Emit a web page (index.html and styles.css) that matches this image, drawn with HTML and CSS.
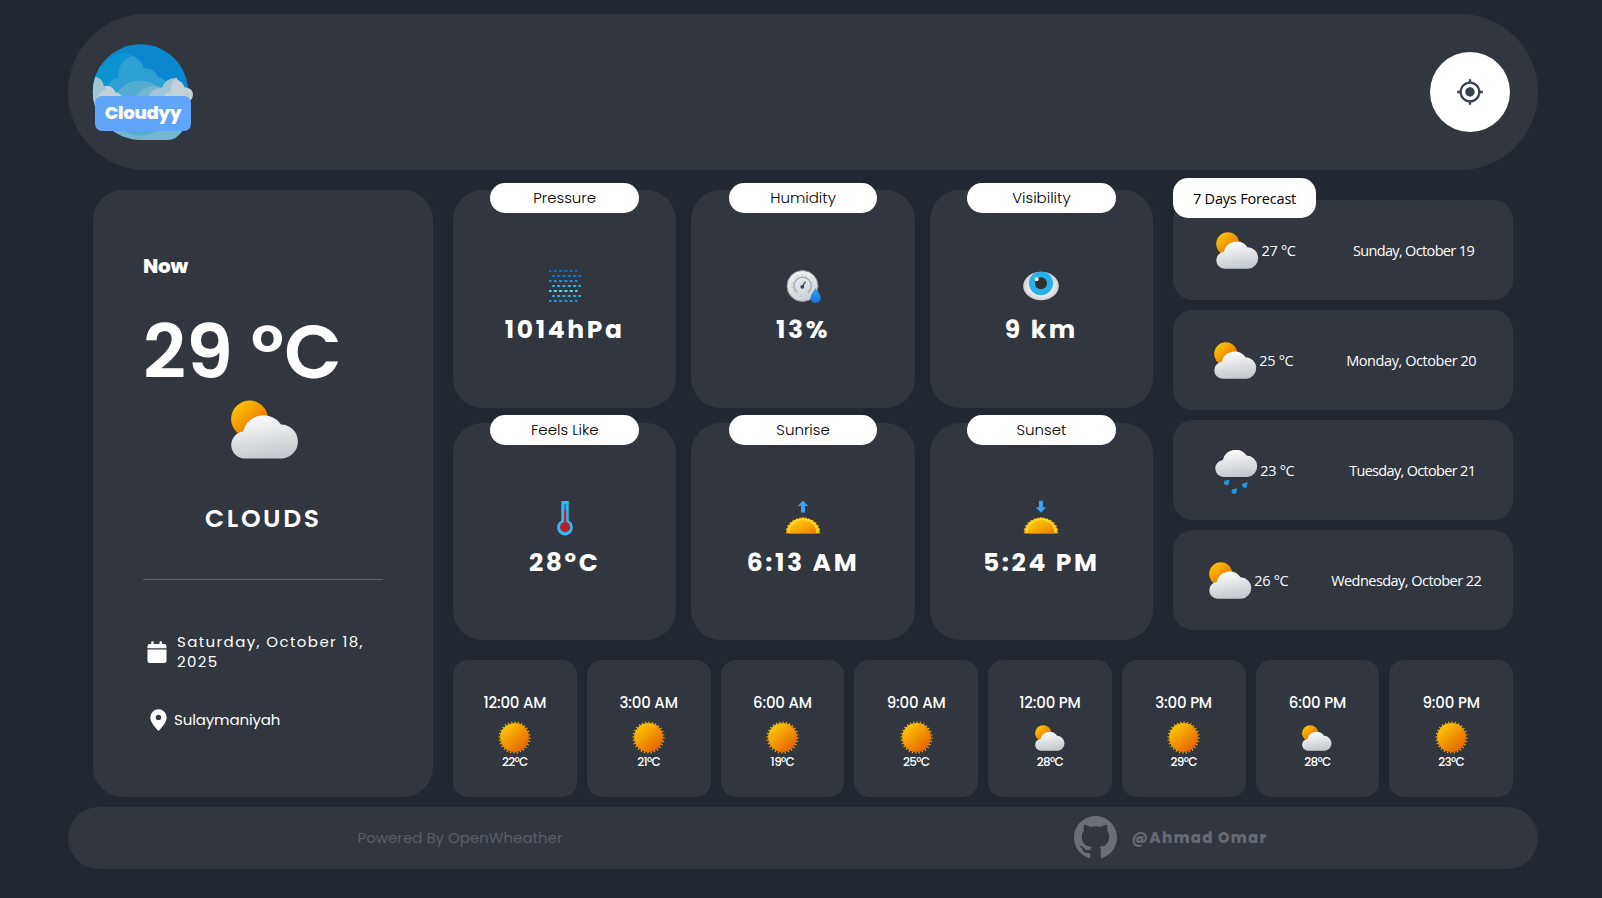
FILE: index.html
```
<!DOCTYPE html>
<html lang="en">
<head>
<meta charset="utf-8">
<title>Cloudyy</title>
<link rel="stylesheet" href="styles.css">
</head>
<body>
<svg class="defs" aria-hidden="true">
  <defs>
    <linearGradient id="g-sun" x1="0.15" y1="0.1" x2="0.85" y2="0.9"><stop offset="0" stop-color="#fcc602"/><stop offset="1" stop-color="#e66200"/></linearGradient>
    <linearGradient id="g-half" x1="0" y1="0" x2="1" y2="1"><stop offset="0.1" stop-color="#fed000"/><stop offset="1" stop-color="#ea7a00"/></linearGradient>
    <linearGradient id="g-cloud" x1="0.35" y1="0" x2="0.6" y2="1"><stop offset="0" stop-color="#fdfdfd"/><stop offset="1" stop-color="#c2c8cc"/></linearGradient>
    <linearGradient id="g-drop" x1="0" y1="0" x2="0" y2="1"><stop offset="0" stop-color="#3aa0f5"/><stop offset="1" stop-color="#0c74e0"/></linearGradient>
    <linearGradient id="g-gauge" x1="0" y1="0" x2="0.4" y2="1"><stop offset="0" stop-color="#f4f5f6"/><stop offset="1" stop-color="#cfd3d6"/></linearGradient>
    <radialGradient id="g-eye"><stop offset="0.6" stop-color="#f2f2f2"/><stop offset="1" stop-color="#cfd0d2"/></radialGradient>
    <clipPath id="disc"><circle cx="47.5" cy="48" r="47.7"/></clipPath>
    <clipPath id="eyeball"><ellipse cx="18" cy="18" rx="17.8" ry="14.3"/></clipPath>
  </defs>
  <symbol id="partly" viewBox="0 0 67 58">
    <circle cx="18.3" cy="18.6" r="18.2" fill="url(#g-sun)"/>
    <path d="M13 57.500A13.300 13.300 0 0 1 12 31A20.700 20.700 0 0 1 49.300 24.100A16.750 16.750 0 0 1 51 57.500Z" fill="url(#g-cloud)"/>
  </symbol>
  <symbol id="rain" viewBox="0 0 67 69">
    <path d="M13 42.200A13.300 13.300 0 0 1 12 15.700A20.700 20.700 0 0 1 49.300 8.800A16.750 16.750 0 0 1 51 42.200Z" fill="url(#g-cloud)"/>
    <g fill="#1b97e4">
      <path id="drop" d="M22.5 46.5L21.4 53.5A4.1 4.1 0 1 1 15.4 48Z"/>
      <use href="#drop" x="12" y="13.5"/>
      <use href="#drop" x="28.500" y="4"/>
    </g>
  </symbol>
  <symbol id="sun" viewBox="0 0 33 33">
    <circle cx="16.500" cy="16.500" r="15.200" fill="none" stroke="#efa90a" stroke-width="1.800" pathLength="84" stroke-dasharray="1.100 1.900"/>
    <circle cx="16.500" cy="16.500" r="14.400" fill="url(#g-sun)"/>
  </symbol>
  <symbol id="half" viewBox="0 0 36 18">
    <path d="M0.200 18L1.800 16L0.700 13.500L2.700 12.200L2.300 9.700L4.500 9.200L4.800 6.700L7 6.600L7.900 4.300L10 4.800L11.400 2.700L13.300 3.600L15.200 1.700L16.700 3L18 1L19.300 3L20.800 1.700L22.700 3.600L24.600 2.700L26 4.800L28.100 4.300L29 6.600L31.200 6.700L31.500 9.200L33.700 9.700L33.300 12.200L35.300 13.500L34.200 16L35.800 18Z" fill="#fcb910"/>
    <path d="M2.700 18A15.300 15.300 0 0 1 33.300 18Z" fill="#ffd633"/>
    <path d="M4.500 18A13.500 13.500 0 0 1 31.500 18Z" fill="url(#g-half)"/>
  </symbol>
</svg>

<div class="app">
  <header class="topbar">
    <div class="logo">
      <svg class="logo-art" viewBox="0 0 96 96">
        <path d="M47.500 96A48 48 0 0 1 0 48L60 50H93Q95 78 90 86Q84 96 74 96Z" fill="#74b6d0"/>
        <g clip-path="url(#disc)">
          <rect width="96" height="60" fill="#0a87cf"/>
          <circle cx="31" cy="32" r="22.500" fill="#0b96d1"/>
          <circle cx="8" cy="36" r="14" fill="#0b96d1"/>
          <path d="M15 60V44Q17 34 26 33.700Q25 25 28.500 20Q33 13.500 39.500 12Q49 17 50.500 24.500Q59 22.500 65.500 33Q72 34 76 42V60Z" fill="#2fa0d3"/>
          <circle cx="47" cy="64" r="27.500" fill="#54acd2"/>
          <circle cx="61" cy="62" r="20" fill="#74b6d0"/>
          <circle cx="-1" cy="44" r="12" fill="#a1c6d6"/>
          <rect x="0" y="42" width="5" height="40" fill="#a1c6d6"/>
        </g>
        <path d="M8 44Q13 40 18 43L20 52H4Z" fill="#a1c6d6"/>
        <path d="M55 53Q59 43 69 44Q73 33 84 34L90 56H55Z" fill="#a1c6d6"/>
        <path d="M70 56Q71 49 78 47Q77 41 82 35.600Q89.500 36.500 91.700 43.600C101 43.600 102 53 97 57H70Z" fill="#c4d1d8"/>
        <path d="M4 54Q6 47 13 46.500Q13 44 11.500 42.300Q19 41 22.500 48.500Q26 48 30 54Z" fill="#c4d1d8"/>
      </svg>
      <span class="logo-name">Cloudyy</span>
    </div>
    <button class="locate" aria-label="Use my location">
      <svg viewBox="0 0 24 24"><path d="M12 8c-2.210 0-4 1.790-4 4s1.790 4 4 4 4-1.790 4-4-1.790-4-4-4zm8.940 3A8.994 8.994 0 0 0 13 3.060V1h-2v2.060A8.994 8.994 0 0 0 3.060 11H1v2h2.060A8.994 8.994 0 0 0 11 20.940V23h2v-2.060A8.994 8.994 0 0 0 20.940 13H23v-2h-2.060zM12 19c-3.870 0-7-3.130-7-7s3.130-7 7-7 7 3.130 7 7-3.130 7-7 7z"/></svg>
    </button>
  </header>

  <main class="board">
    <section class="now card">
      <h2 class="now-title">Now</h2>
      <p class="now-temp">29 °C</p>
      <svg class="now-icon"><use href="#partly"/></svg>
      <p class="now-sky">CLOUDS</p>
      <hr class="rule">
      <div class="meta meta-date">
        <svg class="cal" viewBox="0 0 20 22"><path d="M0.500 7.200V5.200Q0.500 2.900 2.800 2.900H4.300V1Q4.300 0.300 5 0.300H6Q6.700 0.300 6.700 1V2.900H12.500V1Q12.500 0.300 13.200 0.300H14.200Q14.900 0.300 14.900 1V2.900H17.200Q19.500 2.900 19.500 5.200V7.200ZM0.500 8.500H19.500V19.700Q19.500 22 17.200 22H2.800Q0.500 22 0.500 19.700Z"/></svg>
        <span class="date">Saturday, October 18, 2025</span>
      </div>
      <div class="meta meta-place">
        <svg class="pin" viewBox="0 0 17 22"><path fill-rule="evenodd" d="M8.500 0.300A8.200 8.200 0 0 1 16.700 8.500C16.700 13 12 18.200 9.300 21.300Q8.500 22 7.700 21.300C5 18.200 0.300 13 0.300 8.500A8.200 8.200 0 0 1 8.500 0.300ZM8.500 5.700A2.700 2.700 0 1 0 8.500 11.100A2.700 2.700 0 0 0 8.500 5.700Z"/></svg>
        <span>Sulaymaniyah</span>
      </div>
    </section>

    <section class="stats">
      <article class="stat card"><h3 class="pill">Pressure</h3>
        <svg class="stat-icon" viewBox="0 0 36 36"><g fill="none" stroke-width="2" stroke-dasharray="3.200 2.130">
          <g stroke-dashoffset="0.700"><path d="M2 3H30.500" stroke="#1566ac"/><path d="M2 13H30.500" stroke="#1e8fd2"/><path d="M2 23H30.500" stroke="#55d3e8"/><path d="M2 33H30.500" stroke="#1e8fd2"/></g>
          <g stroke-dashoffset="0.500"><path d="M5.200 8H34" stroke="#1074c2"/><path d="M5.200 18H34" stroke="#2eacd9"/><path d="M5.200 28H34" stroke="#2eacd9"/></g></g></svg>
        <p class="value">1014hPa</p></article>
      <article class="stat card"><h3 class="pill">Humidity</h3>
        <svg class="stat-icon" viewBox="0 0 36 36">
          <circle cx="17.500" cy="18" r="15.500" fill="url(#g-gauge)" stroke="#8d959c" stroke-width="1"/>
          <circle cx="17.500" cy="17.500" r="10.500" fill="none" stroke="#a8b0b8" stroke-width="1" stroke-dasharray="1 3.400"/>
          <path d="M12.300 24.500A8.600 8.600 0 1 1 22.800 24.500" fill="none" stroke="#9ba5af" stroke-width="1.200"/>
          <circle cx="17.300" cy="18.500" r="4.500" fill="#d5e2ee"/>
          <circle cx="17.300" cy="18.800" r="1.900" fill="#3a424a"/><path d="M17.300 18.500L20.500 13.500" stroke="#3a424a" stroke-width="1.300"/>
          <path d="M30.700 20C32.700 23.500 35.700 26.500 35.700 30A5.100 5.100 0 0 1 25.500 30C25.500 26.500 28.700 23.500 30.700 20Z" fill="url(#g-drop)"/></svg>
        <p class="value">13%</p></article>
      <article class="stat card"><h3 class="pill">Visibility</h3>
        <svg class="stat-icon" viewBox="0 0 36 36">
          <ellipse cx="18" cy="18" rx="17.800" ry="14.300" fill="url(#g-eye)"/>
          <circle cx="18" cy="15.300" r="12" fill="#29b0e8" clip-path="url(#eyeball)"/>
          <circle cx="18" cy="15.300" r="6" fill="#303030"/><circle cx="13.700" cy="11.200" r="1.900" fill="#fff"/></svg>
        <p class="value">9 km</p></article>
      <article class="stat stat-low card"><h3 class="pill">Feels Like</h3>
        <svg class="stat-icon" viewBox="0 0 36 36">
          <path d="M14.300 1H21.700V20.500A7.900 7.900 0 1 1 14.300 20.500Z" fill="#35b8ee"/>
          <path d="M22 2.500V20" stroke="#2a93c4" stroke-width="1" stroke-dasharray="1 1.600"/>
          <rect x="17" y="4" width="2.200" height="8" fill="#1d7fc0"/>
          <rect x="17" y="10.500" width="2.200" height="15" fill="#c32232"/><circle cx="18.100" cy="27.200" r="5.100" fill="#b3202e"/></svg>
        <p class="value">28°C</p></article>
      <article class="stat stat-low card"><h3 class="pill">Sunrise</h3>
        <svg class="stat-icon" viewBox="0 0 36 36"><path d="M18 0.500L23.200 6.100H20V12.500H16V6.100H12.800Z" fill="#409fee"/><use href="#half" y="15.500" width="36" height="18"/></svg>
        <p class="value">6:13 AM</p></article>
      <article class="stat stat-low card"><h3 class="pill">Sunset</h3>
        <svg class="stat-icon" viewBox="0 0 36 36"><path d="M18 12.800L23.200 7.200H20V0.800H16V7.200H12.800Z" fill="#409fee"/><use href="#half" y="15.500" width="36" height="18"/></svg>
        <p class="value">5:24 PM</p></article>
    </section>

    <section class="forecast">
      <h3 class="forecast-title">7 Days Forecast</h3>
      <div class="day card"><div class="day-temp"><svg class="day-icon"><use href="#partly"/></svg><span>27 °C</span></div><span class="day-date d-sun">Sunday, October 19</span></div>
      <div class="day card"><div class="day-temp"><svg class="day-icon"><use href="#partly"/></svg><span>25 °C</span></div><span class="day-date d-mon">Monday, October 20</span></div>
      <div class="day card"><div class="day-temp"><svg class="day-icon day-rain"><use href="#rain"/></svg><span>23 °C</span></div><span class="day-date d-tue">Tuesday, October 21</span></div>
      <div class="day card"><div class="day-temp"><svg class="day-icon"><use href="#partly"/></svg><span>26 °C</span></div><span class="day-date d-wed">Wednesday, October 22</span></div>
    </section>

    <section class="hours">
      <div class="hour card"><span class="time">12:00 AM</span><svg class="hour-icon"><use href="#sun"/></svg><span class="deg">22°C</span></div>
      <div class="hour card"><span class="time">3:00 AM</span><svg class="hour-icon"><use href="#sun"/></svg><span class="deg">21°C</span></div>
      <div class="hour card"><span class="time">6:00 AM</span><svg class="hour-icon"><use href="#sun"/></svg><span class="deg">19°C</span></div>
      <div class="hour card"><span class="time">9:00 AM</span><svg class="hour-icon"><use href="#sun"/></svg><span class="deg">25°C</span></div>
      <div class="hour card"><span class="time">12:00 PM</span><svg class="hour-icon hour-cloud"><use href="#partly"/></svg><span class="deg">28°C</span></div>
      <div class="hour card"><span class="time">3:00 PM</span><svg class="hour-icon"><use href="#sun"/></svg><span class="deg">29°C</span></div>
      <div class="hour card"><span class="time">6:00 PM</span><svg class="hour-icon hour-cloud"><use href="#partly"/></svg><span class="deg">28°C</span></div>
      <div class="hour card"><span class="time">9:00 PM</span><svg class="hour-icon"><use href="#sun"/></svg><span class="deg">23°C</span></div>
    </section>
  </main>

  <footer class="footer">
    <span class="powered">Powered By OpenWheather</span>
    <div class="author">
      <svg class="github" viewBox="0 0 16 16"><path d="M8 0C3.580 0 0 3.580 0 8c0 3.540 2.290 6.530 5.470 7.590.4.070.55-.17.55-.38 0-.19-.01-.82-.01-1.490-2.010.37-2.530-.49-2.690-.94-.09-.23-.48-.94-.82-1.130-.28-.15-.68-.52-.01-.53.63-.01 1.080.58 1.230.82.72 1.210 1.870.87 2.330.66.07-.52.28-.87.51-1.070-1.780-.2-3.640-.89-3.640-3.950 0-.87.31-1.590.82-2.150-.08-.2-.36-1.020.08-2.120 0 0 .67-.21 2.200.82.64-.18 1.320-.27 2-.27s1.360.09 2 .27c1.530-1.040 2.200-.82 2.200-.82.44 1.100.16 1.920.08 2.120.51.56.82 1.270.82 2.150 0 3.070-1.870 3.750-3.650 3.950.29.25.54.73.54 1.480 0 1.070-.01 1.930-.01 2.200 0 .21.15.46.55.38A8.010 8.010 0 0 0 16 8c0-4.420-3.580-8-8-8"/></svg>
      <span class="handle">@Ahmad Omar</span>
    </div>
  </footer>
</div>
</body>
</html>
```
FILE: styles.css
```
* { box-sizing: border-box; }
body { margin: 0; background: #222831; color: #fff; font-family: "Poppins", "Inter", sans-serif; overflow: hidden; }
h2, h3, p, hr { margin: 0; }
.defs { position: absolute; width: 0; height: 0; }
.app { width: 1470px; margin: 14px 0 0 68px; }
.card { background: #31363f; }

.topbar { height: 156px; border-radius: 78px; background: #31363f; display: flex; align-items: center; justify-content: space-between; padding: 0 28px 0 25px; }
.logo { position: relative; width: 98px; height: 96px; }
.logo-art { display: block; width: 96px; height: 96px; overflow: visible; }
.logo-name { position: absolute; left: 2px; top: 52px; width: 96px; height: 35px; border-radius: 7px; background: #60a5fa; font-size: 18px; font-weight: 800; line-height: 34px; letter-spacing: -0.3px; text-align: center; }
.locate { width: 80px; height: 80px; padding: 0; border: 0; border-radius: 50%; background: #fff; display: flex; align-items: center; justify-content: center; }
.locate svg { width: 28px; height: 28px; fill: #374151; }

.board { width: 1420px; margin: 20px 0 0 25px; display: grid; grid-template-columns: 340px 700px 340px; grid-template-rows: 450px 137px; column-gap: 20px; row-gap: 20px; }

.now { grid-row: 1 / 3; height: 607px; border-radius: 30px; padding: 61px 50px 0; display: flex; flex-direction: column; }
.now-title { font-size: 20px; font-weight: 800; line-height: 30px; letter-spacing: -0.3px; }
.now-temp { margin-top: 31px; font-size: 75px; font-weight: 600; line-height: 80px; white-space: nowrap; }
.now-icon { width: 68px; height: 59px; margin: 8px 0 0 88px; }
.now-sky { margin-top: 42px; padding-left: 62px; font-size: 25px; font-weight: 600; line-height: 36px; letter-spacing: 2.6px; }
.rule { margin-top: 42px; border: 0; height: 1px; background: #5d6168; flex: none; }
.meta { display: flex; align-items: center; font-size: 15px; }
.meta svg { fill: #fff; flex: none; }
.meta-date { margin-top: 52px; line-height: 20px; letter-spacing: 1.4px; }
.cal { width: 20px; height: 22px; margin-left: 4px; }
.date { margin-left: 10px; width: 200px; }
.meta-place { margin-top: 36px; line-height: 24px; letter-spacing: -0.12px; }
.pin { width: 17px; height: 22px; margin: 0 7px 0 7px; }

.stats { height: 450px; display: grid; grid-template-columns: repeat(3, 1fr); grid-template-rows: repeat(2, 1fr); gap: 15px; }
.stat { position: relative; border-radius: 30px; padding-top: 78px; display: flex; flex-direction: column; align-items: center; }
.pill { position: absolute; top: -7px; left: 37.33px; width: 148.8px; height: 30px; border-radius: 15px; background: #fff; color: #000; font-size: 15px; font-weight: 300; line-height: 30px; text-align: center; }
.stat-icon { width: 36px; height: 36px; flex: none; }
.value { margin-top: 8px; font-size: 25px; font-weight: 700; line-height: 36px; letter-spacing: 2.6px; }
.stat-low { padding-top: 77px; }
.stat-low .pill { top: -8px; }
.stat-low .value { margin-top: 9px; }

.forecast { position: relative; height: 450px; padding-top: 10px; display: flex; flex-direction: column; gap: 10px; font-family: "Open Sans", sans-serif; font-size: 14.5px; font-weight: 400; }
.forecast-title { position: absolute; left: 0; top: -12px; width: 143px; height: 40px; border-radius: 15px; background: #fff; color: #000; font-size: 14.5px; font-weight: 400; line-height: 41px; letter-spacing: -0.18px; text-align: center; }
.day { height: 100px; border-radius: 20px; display: flex; align-items: center; justify-content: space-around; white-space: nowrap; }
.day-temp { width: 63px; display: flex; align-items: center; letter-spacing: -0.3px; }
.day-icon { width: 43px; height: 37px; margin: 0 2.5px 0 4px; flex: none; }
.day-rain { height: 44px; margin-top: 4px; }
.d-sun { letter-spacing: -0.65px; }
.d-mon { letter-spacing: -0.43px; }
.d-tue { letter-spacing: -0.68px; }
.d-wed { letter-spacing: -0.54px; }

.hours { grid-column: 2 / 4; display: grid; grid-template-columns: repeat(8, 1fr); gap: 10px; }
.hour { border-radius: 15px; padding-top: 32px; display: flex; flex-direction: column; align-items: center; }
.time { font-size: 15px; font-weight: 500; line-height: 22px; letter-spacing: -0.18px; }
.hour-icon { width: 33px; height: 33px; margin: 7px 0 0; flex: none; }
.hour-cloud { width: 30px; height: 26px; margin: 11px 0 3px; }
.deg { font-size: 12px; font-weight: 500; line-height: 16px; letter-spacing: -0.68px; }

.footer { height: 62px; margin-top: 10px; border-radius: 31px; background: #31363f; display: grid; grid-template-columns: 1fr 1fr; align-items: center; justify-items: center; padding-bottom: 1px; font-size: 15px; }
.powered { padding-left: 49px; color: #5a5e65; }
.author { display: flex; align-items: center; gap: 15px; color: #66696f; }
.github { width: 43px; height: 43px; fill: #6b6e74; }
.handle { font-weight: 800; letter-spacing: 1.25px; }
```
